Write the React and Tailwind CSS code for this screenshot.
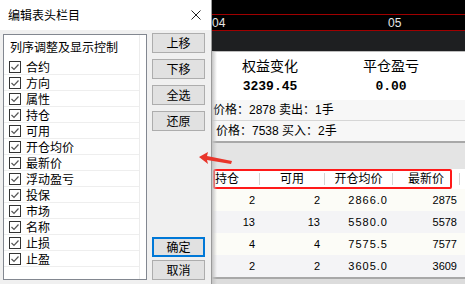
import React from "react";

const cols = ["合约", "方向", "属性", "持仓", "可用", "开仓均价", "最新价", "浮动盈亏", "投保", "市场", "名称", "止损", "止盈"];

const rows = [
  ["2", "2", "2866.0", "2875"],
  ["13", "13", "5580.0", "5578"],
  ["4", "4", "7575.5", "7577"],
  ["2", "2", "3605.0", "3609"],
];

const Check = () => (
  <span className="w-[12px] h-[12px] border border-[#333] bg-white flex items-center justify-center shrink-0">
    <svg width="10" height="10" viewBox="0 0 10 10">
      <polyline points="1.5,5 4,7.5 8.5,2.5" fill="none" stroke="#555" strokeWidth="1.2" />
    </svg>
  </span>
);

const Btn = ({ children, primary, className = "" }) => (
  <div
    className={`w-[53px] h-[20px] flex items-center justify-center bg-[#e1e1e1] text-[12px] leading-none ${
      primary ? "border-2 border-[#0078d7]" : "border border-[#adadad]"
    } ${className}`}
  >
    {children}
  </div>
);

export default function App() {
  return (
    <div className="w-[465px] h-[284px] relative overflow-hidden flex font-['Noto_Sans_CJK_SC',sans-serif] text-black bg-white">
      {/* dialog */}
      <div className="w-[212px] h-full flex flex-col border-r border-[#9a9a9a] shrink-0">
        <div className="h-[30px] bg-white flex items-center justify-between pl-[8px] pr-[10px]">
          <span className="text-[12px] leading-none">编辑表头栏目</span>
          <svg width="10" height="10" viewBox="0 0 10 10">
            <path d="M0.5 0.5 L9.5 9.5 M9.5 0.5 L0.5 9.5" stroke="#222" strokeWidth="1" />
          </svg>
        </div>
        <div className="flex-1 bg-[#f0f0f0] flex pt-[3px]">
          <div className="ml-[3px] mt-[1px] w-[144px] h-[246px] border border-[#828790] bg-white flex">
            <div className="w-[136px] h-full border-r border-[#ececec] flex flex-col">
              <div className="h-[24px] flex items-center pl-[6px] text-[12px] leading-none">列序调整及显示控制</div>
              {cols.map((c) => (
                <div key={c} className="h-[16px] flex items-center gap-[5px] pl-[5px] border-b border-[#eeeeee] text-[12px] leading-none">
                  <Check />
                  <span>{c}</span>
                </div>
              ))}
            </div>
          </div>
          <div className="ml-[5px] flex flex-col h-[250px]">
            <Btn>上移</Btn>
            <Btn className="mt-[6px]">下移</Btn>
            <Btn className="mt-[6px]">全选</Btn>
            <Btn className="mt-[6px]">还原</Btn>
            <div className="flex-1" />
            <Btn primary>确定</Btn>
            <Btn className="mt-[3px] mb-[3px]">取消</Btn>
          </div>
        </div>
      </div>

      {/* background window */}
      <div className="flex-1 h-full flex flex-col relative font-['Liberation_Sans','Noto_Sans_CJK_SC',sans-serif]">
        <div className="h-[14px] bg-black" />
        <div className="h-[1px] bg-[#a00000]" />
        <div className="h-[15px] bg-black flex items-center text-[12px] text-[#e8e8e8] leading-none">
          <span className="w-[176px]">04</span>
          <span>05</span>
        </div>
        <div className="h-[1px] bg-[#a00000]" />
        <div className="h-[20px] bg-[#1e1f21]" />
        <div className="h-[1px] bg-[#bdbdbd]" />
        <div className="h-[48px] bg-white flex">
          <div className="w-[116px] flex flex-col items-center pt-[6px]">
            <span className="text-[14px] leading-[16px]">权益变化</span>
            <span className="mt-[6px] text-[13px] font-bold font-['Liberation_Mono',monospace] leading-[14px]">3239.45</span>
          </div>
          <div className="w-[126px] flex flex-col items-center pt-[6px]">
            <span className="text-[14px] leading-[16px]">平仓盈亏</span>
            <span className="mt-[6px] text-[13px] font-bold font-['Liberation_Mono',monospace] leading-[14px]">0.00</span>
          </div>
        </div>
        <div className="h-[21px] bg-[#f7f7f7] border-b border-[#d6d6d6] flex items-center pl-[1px] text-[12px] leading-none whitespace-nowrap">
          价格：2878 卖出：1手
        </div>
        <div className="h-[20px] bg-[#f7f7f7] flex items-center pl-[4px] text-[12px] leading-none whitespace-nowrap">
          价格：7538 买入：2手
        </div>
        <div className="h-[2px] bg-[#a8a8a8]" />
        <div className="h-[26px] bg-[#e4e4e4]" />
        <div className="h-[20px] bg-white flex items-center text-[12px] leading-none relative">
          <div className="w-[48px] pl-[3px] border-r border-[#d4d4d4] h-[12px] flex items-center">持仓</div>
          <div className="w-[65px] text-center border-r border-[#d4d4d4] h-[12px] flex items-center justify-center">可用</div>
          <div className="w-[68px] text-center border-r border-[#d4d4d4] h-[12px] flex items-center justify-center">开仓均价</div>
          <div className="w-[67px] text-center border-r border-[#d4d4d4] h-[12px] flex items-center justify-center">最新价</div>
          <div className="absolute left-[1px] top-0 w-[239px] h-[20px] border-2 border-[#ff1a1a] rounded-[2px]" />
        </div>
        {rows.map((r, i) => (
          <div
            key={i}
            className={`h-[22px] flex items-center text-[11px] leading-none ${i % 2 ? "bg-[#f4f4f6]" : "bg-[#fcfcf7]"}`}
          >
            <span className="w-[43px] text-right">{r[0]}</span>
            <span className="w-[65px] text-right">{r[1]}</span>
            <span className="w-[68px] text-right tracking-[1px]">{r[2]}</span>
            <span className="w-[69px] text-right">{r[3]}</span>
          </div>
        ))}
        <div className="h-[2px] bg-[#a8a8a8]" />
        <div className="flex-1 bg-[#dcdcdc]" />
        <div className="absolute left-0 top-[52px] bottom-0 w-[5px] bg-gradient-to-r from-[#c4c4c4] to-transparent" />
      </div>

      {/* annotation arrow */}
      <svg className="absolute left-[196px] top-[148px]" width="40" height="20" viewBox="0 0 40 20">
        <polygon points="3,9 12,4 11,8 36,13 35,16 11,12 12,16" fill="#e8352a" />
      </svg>
    </div>
  );
}
